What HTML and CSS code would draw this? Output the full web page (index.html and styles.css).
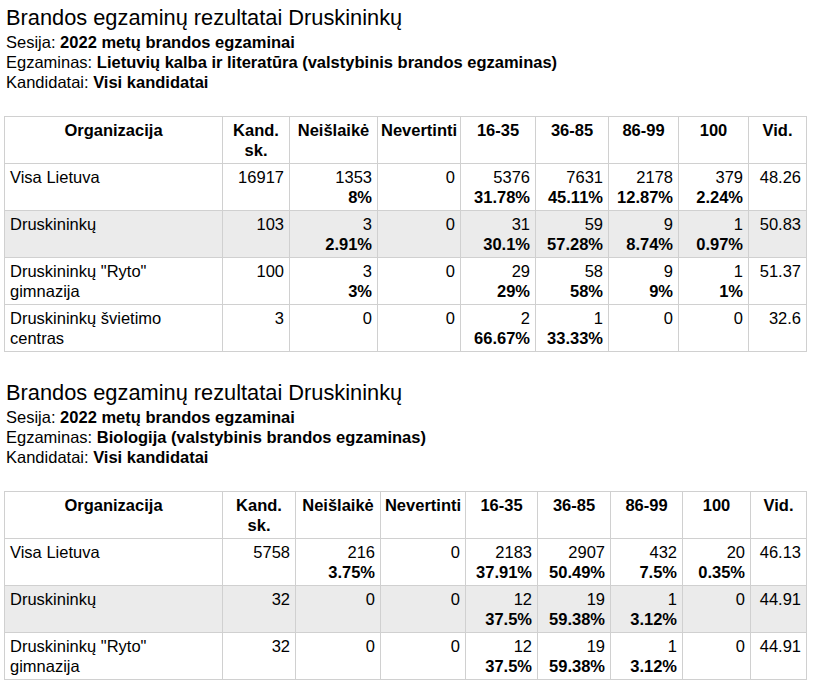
FILE: index.html
```html
<!DOCTYPE html>
<html lang="lt">
<head>
<meta charset="utf-8">
<title>Brandos egzaminų rezultatai Druskininkų</title>
<link rel="stylesheet" href="styles.css">
</head>
<body>
<section class="report">
  <div class="report-head">
    <div class="report-title">Brandos egzaminų rezultatai Druskininkų</div>
    <div class="meta">Sesija: <b>2022 metų brandos egzaminai</b></div>
    <div class="meta">Egzaminas: <b>Lietuvių kalba ir literatūra (valstybinis brandos egzaminas)</b></div>
    <div class="meta">Kandidatai: <b>Visi kandidatai</b></div>
  </div>
  <table class="results results-a">
    <colgroup>
      <col class="c-org"><col class="c-kand"><col class="c-neis"><col class="c-nev"><col class="c-r1"><col class="c-r2"><col class="c-r3"><col class="c-r4"><col class="c-vid">
    </colgroup>
    <thead>
      <tr><th>Organizacija</th><th>Kand. sk.</th><th>Neišlaikė</th><th>Nevertinti</th><th>16-35</th><th>36-85</th><th>86-99</th><th>100</th><th>Vid.</th></tr>
    </thead>
    <tbody>
      <tr><td class="org">Visa Lietuva</td><td>16917</td><td>1353<br><b>8%</b></td><td>0</td><td>5376<br><b>31.78%</b></td><td>7631<br><b>45.11%</b></td><td>2178<br><b>12.87%</b></td><td>379<br><b>2.24%</b></td><td>48.26</td></tr>
      <tr class="hl"><td class="org">Druskininkų</td><td>103</td><td>3<br><b>2.91%</b></td><td>0</td><td>31<br><b>30.1%</b></td><td>59<br><b>57.28%</b></td><td>9<br><b>8.74%</b></td><td>1<br><b>0.97%</b></td><td>50.83</td></tr>
      <tr><td class="org">Druskininkų "Ryto" gimnazija</td><td>100</td><td>3<br><b>3%</b></td><td>0</td><td>29<br><b>29%</b></td><td>58<br><b>58%</b></td><td>9<br><b>9%</b></td><td>1<br><b>1%</b></td><td>51.37</td></tr>
      <tr><td class="org">Druskininkų švietimo centras</td><td>3</td><td>0</td><td>0</td><td>2<br><b>66.67%</b></td><td>1<br><b>33.33%</b></td><td>0</td><td>0</td><td>32.6</td></tr>
    </tbody>
  </table>
</section>

<section class="report">
  <div class="report-head">
    <div class="report-title">Brandos egzaminų rezultatai Druskininkų</div>
    <div class="meta">Sesija: <b>2022 metų brandos egzaminai</b></div>
    <div class="meta">Egzaminas: <b>Biologija (valstybinis brandos egzaminas)</b></div>
    <div class="meta">Kandidatai: <b>Visi kandidatai</b></div>
  </div>
  <table class="results results-b">
    <colgroup>
      <col class="c-org"><col class="c-kand"><col class="c-neis"><col class="c-nev"><col class="c-r1"><col class="c-r2"><col class="c-r3"><col class="c-r4"><col class="c-vid">
    </colgroup>
    <thead>
      <tr><th>Organizacija</th><th>Kand. sk.</th><th>Neišlaikė</th><th>Nevertinti</th><th>16-35</th><th>36-85</th><th>86-99</th><th>100</th><th>Vid.</th></tr>
    </thead>
    <tbody>
      <tr><td class="org">Visa Lietuva</td><td>5758</td><td>216<br><b>3.75%</b></td><td>0</td><td>2183<br><b>37.91%</b></td><td>2907<br><b>50.49%</b></td><td>432<br><b>7.5%</b></td><td>20<br><b>0.35%</b></td><td>46.13</td></tr>
      <tr class="hl"><td class="org">Druskininkų</td><td>32</td><td>0</td><td>0</td><td>12<br><b>37.5%</b></td><td>19<br><b>59.38%</b></td><td>1<br><b>3.12%</b></td><td>0</td><td>44.91</td></tr>
      <tr><td class="org">Druskininkų "Ryto" gimnazija</td><td>32</td><td>0</td><td>0</td><td>12<br><b>37.5%</b></td><td>19<br><b>59.38%</b></td><td>1<br><b>3.12%</b></td><td>0</td><td>44.91</td></tr>
    </tbody>
  </table>
</section>
</body>
</html>
```
FILE: styles.css
```css
html, body {
  margin: 0;
  padding: 0;
  background: #fff;
}
body {
  font-family: "Liberation Sans", Arial, sans-serif;
  color: #000;
  padding: 4px 4px 0 4px;
}
.report {
  margin-bottom: 27px;
}
.report-head {
  padding-left: 2px;
  margin-bottom: 24px;
}
.report-title {
  font-size: 21.8px;
  line-height: 28px;
}
.meta {
  font-size: 16.5px;
  line-height: 20px;
}
.meta b {
  font-weight: bold;
}
.results {
  width: 802px;
  table-layout: fixed;
  border-collapse: collapse;
  font-size: 16.5px;
  line-height: 20px;
}
.results th,
.results td {
  border: 1px solid #d0d0d0;
  padding: 3px 5px;
  vertical-align: top;
}
.results th {
  font-weight: bold;
  text-align: center;
  padding: 3px 3px;
}
.results td {
  text-align: right;
}
.results td.org {
  text-align: left;
}
.results tr.hl td {
  background: #ebebeb;
}
.results-a .c-org { width: 218px; }
.results-a .c-kand { width: 67px; }
.results-a .c-neis { width: 88px; }
.results-a .c-nev { width: 83px; }
.results-a .c-r1 { width: 75px; }
.results-a .c-r2 { width: 73px; }
.results-a .c-r3 { width: 70px; }
.results-a .c-r4 { width: 70px; }
.results-a .c-vid { width: 58px; }

.results-b .c-org { width: 218px; }
.results-b .c-kand { width: 73px; }
.results-b .c-neis { width: 85px; }
.results-b .c-nev { width: 85px; }
.results-b .c-r1 { width: 72px; }
.results-b .c-r2 { width: 73px; }
.results-b .c-r3 { width: 72px; }
.results-b .c-r4 { width: 68px; }
.results-b .c-vid { width: 56px; }
```
